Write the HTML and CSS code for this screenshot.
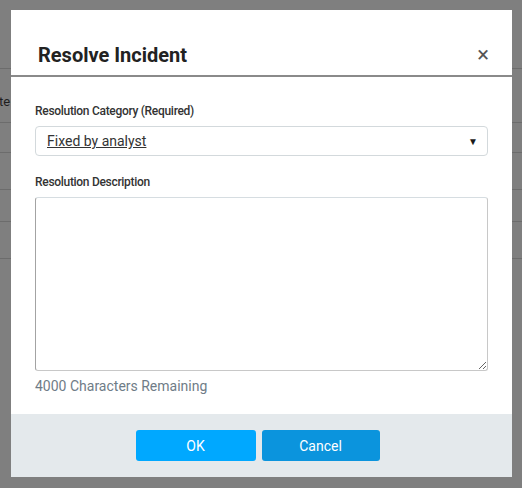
FILE: index.html
```html
<!DOCTYPE html>
<html lang="en">
<head>
    <meta charset="UTF-8">
    <meta name="viewport" content="width=device-width, initial-scale=1.0">
    <title>Resolve Incident</title>
    <link rel="stylesheet" href="styles.css">
</head>
<body>

<div class="page">
    <div class="page-row row-head"><span class="cell-text">State</span></div>
    <div class="page-row row-30"></div>
    <div class="page-row row-37"></div>
    <div class="page-row row-32"></div>
    <div class="page-row row-37"></div>
    <div class="page-row row-40"></div>
</div>

<div class="modal">
    <div class="modal-header">
        <h2 class="modal-title">Resolve Incident</h2>
        <button class="close-button" aria-label="Close">&times;</button>
    </div>

    <div class="modal-body">
        <label for="resolutionCategory">Resolution Category (Required)</label>
        <div class="select-box">
            <span class="select-value" id="resolutionCategory">Fixed by analyst</span>
            <span class="select-arrow">&#9660;</span>
        </div>

        <label for="resolutionDescription">Resolution Description</label>
        <textarea id="resolutionDescription"></textarea>
        <div class="char-count">4000 Characters Remaining</div>
    </div>

    <div class="modal-footer">
        <button class="btn btn-ok">OK</button>
        <button class="btn btn-cancel">Cancel</button>
    </div>
</div>

</body>
</html>
```

FILE: styles.css
```css
body {
    margin: 0;
    background-color: #7f7f7f;
    font-family: Roboto, "Noto Sans", sans-serif;
    width: 522px;
    height: 488px;
    overflow: hidden;
    position: relative;
}
.page {
    padding-top: 68px;
}
.page-row {
    border-top: 1px solid #6c6c6c;
    box-sizing: border-box;
    font-size: 13px;
    color: #1e1e1e;
    display: flex;
    align-items: flex-end;
}
.row-head {
    height: 54px;
    padding-bottom: 13px;
}
.row-30 { height: 30px; }
.row-32 { height: 32px; }
.row-37 { height: 37px; }
.row-40 { height: 40px; }
.cell-text {
    margin-left: -20px;
}
.modal {
    position: absolute;
    left: 11px;
    top: 10px;
    width: 501px;
    height: 467px;
    background: #fff;
    display: flex;
    flex-direction: column;
}
.modal-header {
    height: 67px;
    border-bottom: 2px solid #8a8a8a;
    display: flex;
    align-items: center;
    justify-content: space-between;
    padding: 24px 23px 0 27px;
    box-sizing: border-box;
}
.modal-title {
    margin: 0;
    font-size: 20px;
    font-weight: 700;
    color: #222;
}
.close-button {
    background: none;
    border: none;
    padding: 0;
    font-family: inherit;
    font-size: 22px;
    line-height: 1;
    color: #555;
    cursor: pointer;
}
.modal-body {
    flex: 1;
    padding: 27px 24px 0 24px;
    display: flex;
    flex-direction: column;
}
label {
    font-size: 12px;
    font-weight: 500;
    letter-spacing: -0.3px;
    color: #333;
    margin-bottom: 8px;
}
.select-box {
    height: 30px;
    border: 1px solid #d3d9dc;
    border-radius: 4px;
    display: flex;
    align-items: center;
    justify-content: space-between;
    padding: 0 9px 0 11px;
    margin-bottom: 19px;
    box-sizing: border-box;
}
.select-value {
    font-size: 14px;
    color: #333;
    text-decoration: underline;
}
.select-arrow {
    font-size: 10px;
    color: #1a1a1a;
}
textarea {
    height: 174px;
    border: 1px solid #c8c8c8;
    border-top-color: #d6dde1;
    border-left-color: #a3a3a3;
    border-radius: 3px;
    resize: vertical;
    margin: 0;
    padding: 6px;
    box-sizing: border-box;
}
.char-count {
    margin-top: 7px;
    font-size: 14px;
    color: #6f7c87;
}
.modal-footer {
    height: 63px;
    background: #e4e9ec;
    display: flex;
    justify-content: center;
    gap: 6px;
    padding: 16px 8px 0 0;
    box-sizing: border-box;
}
.btn {
    height: 31px;
    border: none;
    border-radius: 3px;
    color: #fff;
    font-family: inherit;
    font-size: 14px;
    cursor: pointer;
}
.btn-ok {
    width: 120px;
    background: #00a8ff;
}
.btn-cancel {
    width: 118px;
    background: #0b94dd;
}
```
